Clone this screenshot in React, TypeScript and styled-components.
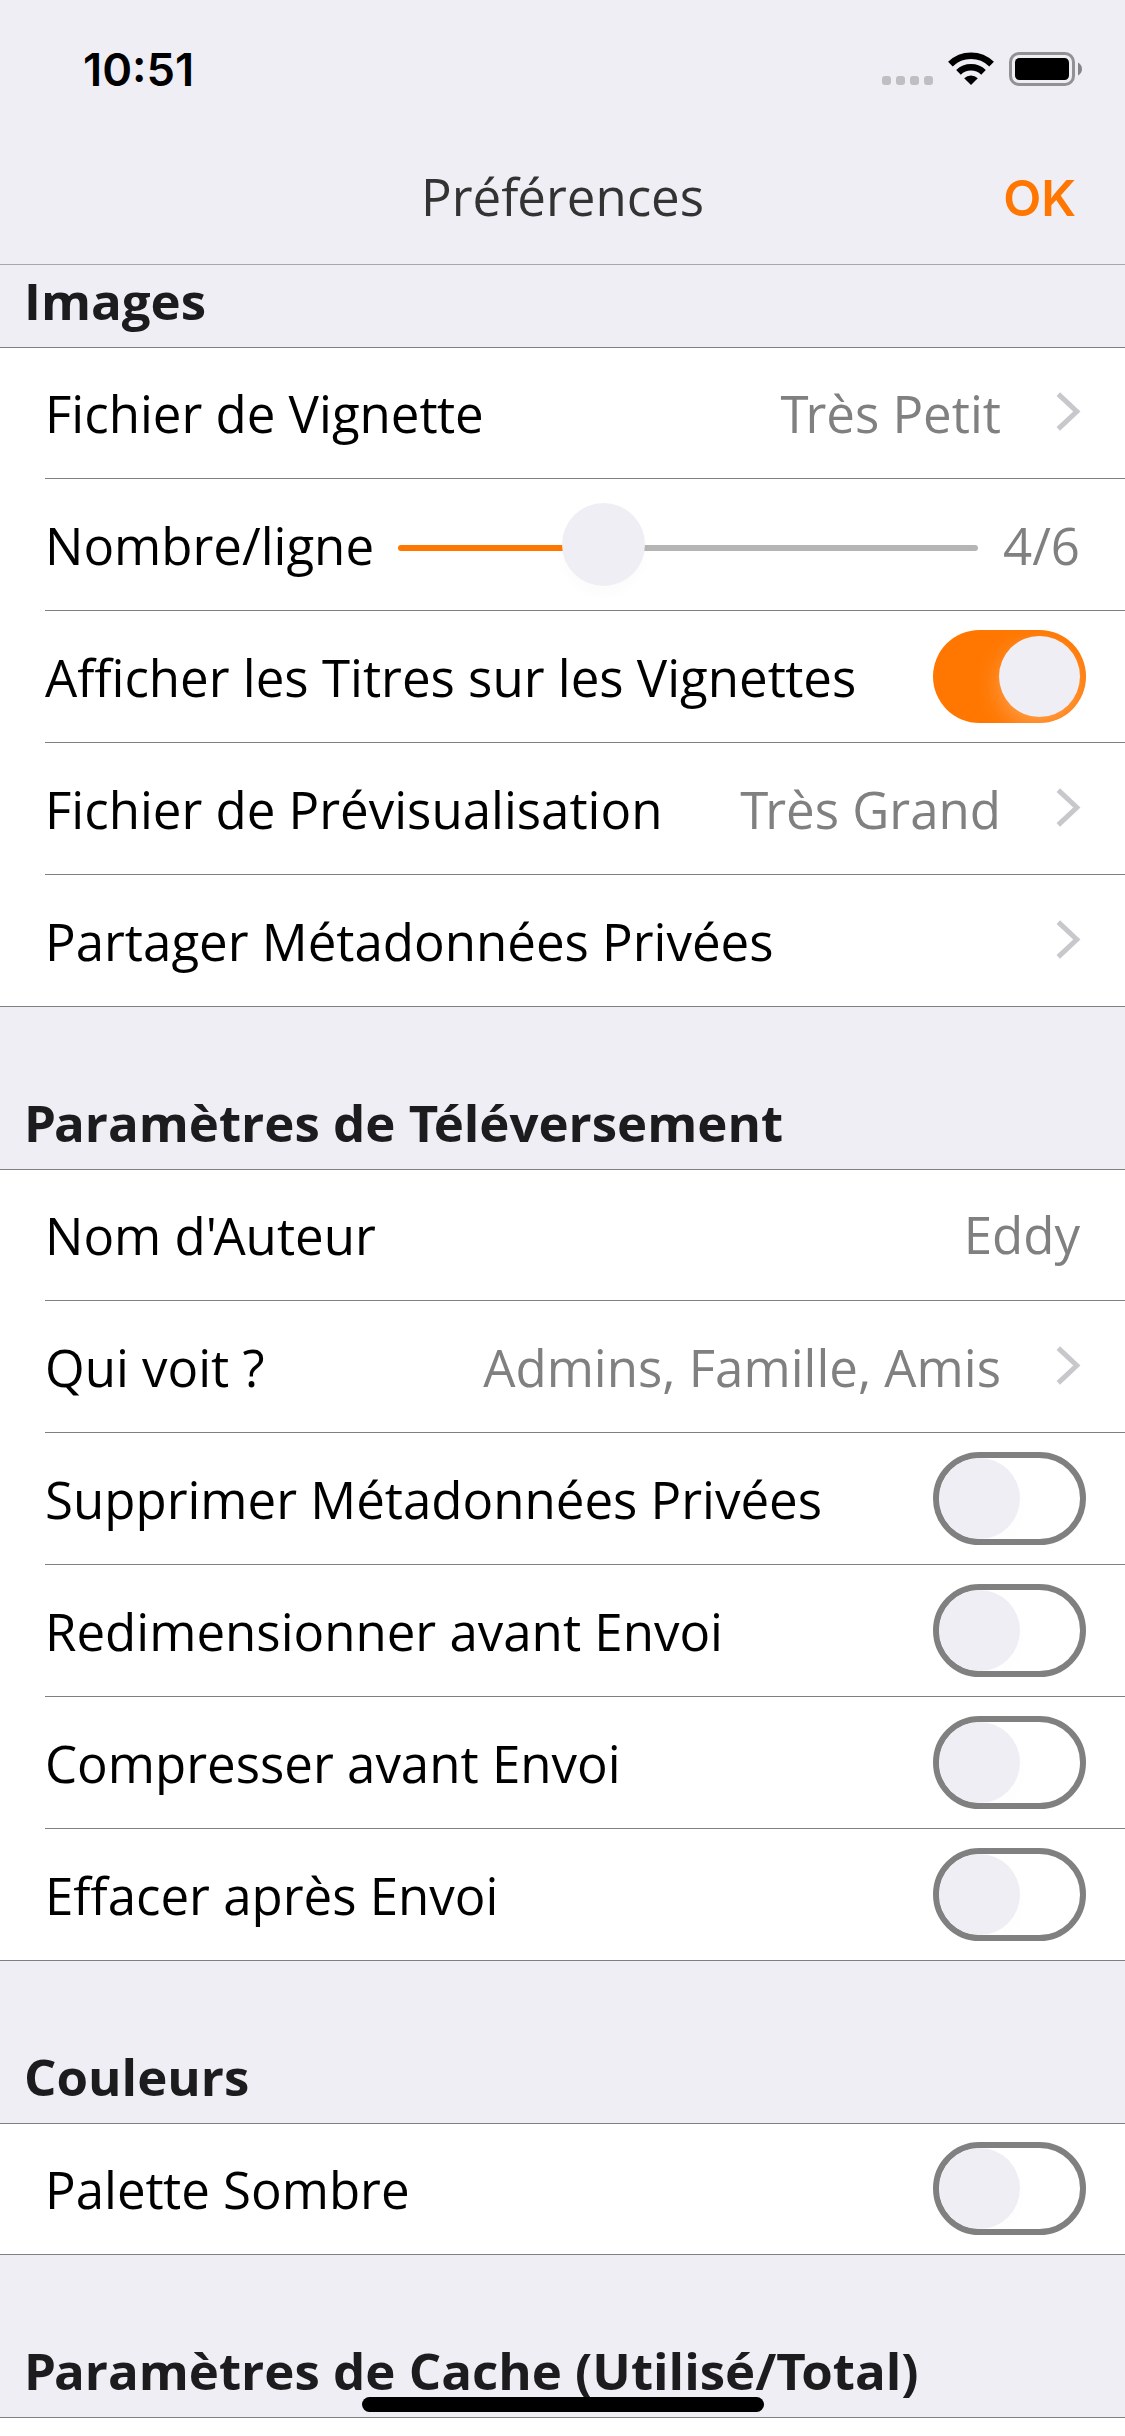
import React from "react";
import styled, { createGlobalStyle } from "styled-components";

const colors = {
  background: "#efeef4",
  cell: "#ffffff",
  orange: "#ff7700",
  separator: "#808080",
  detail: "#808080",
  heading: "#1c1c1e",
};

const GlobalStyle = createGlobalStyle`
  *, *::before, *::after { box-sizing: border-box; }
  body {
    margin: 0;
    background: ${colors.cell};
    font-family: "Open Sans", "Noto Sans", sans-serif;
    font-size: 51px;
  }
`;

const Screen = styled.main`
  position: relative;
  width: 1125px;
  height: 2436px;
  overflow: hidden;
  display: flex;
  flex-direction: column;
  background: ${colors.cell};
`;

const TopArea = styled.header`
  flex: none;
  height: 265px;
  display: flex;
  flex-direction: column;
  background: ${colors.background};
  border-bottom: 1px solid #a7a7ab;
`;

const StatusBar = styled.div`
  height: 132px;
  padding: 37px 43px 0 83px;
  display: flex;
  justify-content: space-between;
  align-items: flex-start;
`;

const Clock = styled.time`
  font: 600 45.300px/65px Inter, "Open Sans", sans-serif;
  color: #000;
`;

const StatusIcons = styled.div`
  display: flex;
  align-items: flex-end;
  padding-top: 15px;
`;

const SignalDots = styled.div`
  display: flex;
  gap: 5px;
  margin: 0 15px 1px 0;
`;

const Dot = styled.i`
  width: 9px;
  height: 9px;
  border-radius: 3px;
  background: #bfbfc2;
`;

const NavBar = styled.div`
  flex: 1;
  display: grid;
  grid-template-columns: 1fr auto 1fr;
  align-items: baseline;
  padding: 0 49px;
  line-height: 128px;
`;

const Title = styled.h1`
  grid-column: 2;
  margin: 0;
  font-size: 51px;
  font-weight: 400;
  color: #333333;
`;

const DoneButton = styled.button`
  justify-self: end;
  padding: 0;
  border: 0;
  background: none;
  font: 600 49.5px/60px Inter, "Open Sans", sans-serif;
  color: ${colors.orange};
`;

const SectionHeading = styled.h2<{ $compact?: boolean }>`
  flex: none;
  height: ${(p) => (p.$compact ? 82 : 162)}px;
  margin: 0;
  padding: 0 24px 9px;
  display: flex;
  align-items: flex-end;
  font-size: 51px;
  line-height: 76px;
  font-weight: 700;
  white-space: nowrap;
  color: ${colors.heading};
  background: ${colors.background};
`;

const Group = styled.section`
  flex: none;
  background: linear-gradient(${colors.separator}, ${colors.separator}) top / 100% 1px no-repeat, ${colors.cell};
`;

const Row = styled.div`
  height: 132px;
  margin-left: 45px;
  padding-right: 45px;
  display: flex;
  align-items: center;
  line-height: 132px;
  border-bottom: 1px solid ${colors.separator};

  &:last-child {
    margin-left: 0;
    padding-left: 45px;
  }
`;

const Label = styled.span`
  white-space: nowrap;
  color: #000;
`;

const Value = styled.span<{ $raised?: boolean }>`
  margin-left: auto;
  padding-bottom: ${(p) => (p.$raised ? 2 : 0)}px;
  white-space: nowrap;
  color: ${colors.detail};
`;

const Tight = styled.span<{ $by: number }>`
  letter-spacing: ${(p) => p.$by}em;
`;

const Chevron = styled.svg`
  flex: none;
  width: 26px;
  height: 42px;
  margin: 0 -1px 1px auto;
  ${Value} + & { margin-left: 54px; }
`;

const Switch = styled.span<{ $on?: boolean }>`
  flex: none;
  width: 153px;
  height: 93px;
  margin: 0 -6px 0 auto;
  padding: ${(p) => (p.$on ? 6 : 0)}px;
  display: flex;
  justify-content: ${(p) => (p.$on ? "flex-end" : "flex-start")};
  border: ${(p) => (p.$on ? "0" : `6px solid ${colors.separator}`)};
  border-radius: 47px;
  background: ${(p) => (p.$on ? colors.orange : "transparent")};
  overflow: hidden;
`;

const Knob = styled.span<{ $on?: boolean }>`
  width: 81px;
  height: 81px;
  border-radius: 50%;
  background: ${colors.background};
  box-shadow: ${(p) =>
    p.$on ? "0 9px 24px rgba(255, 255, 255, 0.3)" : "0 9px 24px rgba(0, 0, 0, 0.01)"};
`;

const Slider = styled.div`
  flex: none;
  width: 580px;
  height: 83px;
  margin: 0 0 0 24px;
  display: flex;
  align-items: center;
`;

const Track = styled.span<{ $width: number; $filled?: boolean }>`
  width: ${(p) => p.$width}px;
  height: 6px;
  margin-top: 7px;
  border-radius: ${(p) => (p.$filled ? "3px 0 0 3px" : "0 3px 3px 0")};
  background: ${(p) => (p.$filled ? colors.orange : "#b5b5b5")};
`;

const SliderKnob = styled.span`
  flex: none;
  width: 83px;
  height: 83px;
  margin: 0 -1px;
  border-radius: 50%;
  background: ${colors.background};
  box-shadow: 0 9px 12px rgba(0, 0, 0, 0.015);
  z-index: 1;
`;

const HomeIndicator = styled.div`
  position: absolute;
  left: 362px;
  bottom: 24px;
  width: 402px;
  height: 15px;
  border-radius: 8px;
  background: #000;
`;

const regularPairs: Record<string, number> = { Tr: -0.06, "'A": -0.07, "fé": -0.02, tt: -0.015 };
const boldPairs: Record<string, number> = { "Té": -0.09, To: -0.09, Pa: -0.04 };

function Kerned({ text, bold }: { text: string; bold?: boolean }) {
  const pairs = bold ? boldPairs : regularPairs;
  const parts: React.ReactNode[] = [];
  let run = "";
  for (let i = 0; i < text.length; i++) {
    const by = pairs[text.slice(i, i + 2)];
    if (by) {
      parts.push(run, <Tight key={i} $by={by}>{text[i]}</Tight>);
      run = "";
    } else {
      run += text[i];
    }
  }
  return <span>{parts}{run}</span>;
}

function Wifi() {
  return (
    <svg width="61" height="34" viewBox="0 0 61 34">
      <g fill="none" stroke="#000" strokeWidth="6.6">
        <path d="M2.4 12.2A29.5 29.5 0 0 1 43.6 12.2" />
        <path d="M10.5 20.3A18 18 0 0 1 35.5 20.3" />
      </g>
      <path d="M16.2 26.3A9.8 9.8 0 0 1 29.8 26.3L23 33Z" fill="#000" />
    </svg>
  );
}

function Battery() {
  return (
    <svg width="73" height="34" viewBox="0 0 73 34">
      <rect x="1.5" y="1.5" width="63" height="31" rx="8.5" fill="none" stroke="#929294" strokeWidth="3" />
      <rect x="6" y="6" width="54" height="22" rx="4.5" fill="#000" />
      <path d="M69 10.5C74.300 13 74.300 21 69 23.500Z" fill="#858587" />
    </svg>
  );
}

function Disclosure() {
  return (
    <Chevron viewBox="0 0 26 42">
      <path d="M3.300 3.200L21.800 20.500L3.300 37.800" fill="none" stroke="#c7c7cc" strokeWidth="5" />
    </Chevron>
  );
}

function Toggle({ on }: { on?: boolean }) {
  return (
    <Switch $on={on}>
      <Knob $on={on} />
    </Switch>
  );
}

function Heading({ text, compact }: { text: string; compact?: boolean }) {
  return (
    <SectionHeading $compact={compact}>
      <Kerned text={text} bold />
    </SectionHeading>
  );
}

type CellProps = {
  label: string;
  value?: string;
  link?: boolean;
  editable?: boolean;
  children?: React.ReactNode;
};

function Cell({ label, value, link, editable, children }: CellProps) {
  return (
    <Row>
      <Label>
        <Kerned text={label} />
      </Label>
      {children}
      {value && (
        <Value $raised={editable}>
          <Kerned text={value} />
        </Value>
      )}
      {link && <Disclosure />}
    </Row>
  );
}

export default function App() {
  return (
    <Screen>
      <GlobalStyle />
      <TopArea>
        <StatusBar>
          <Clock>10:51</Clock>
          <StatusIcons>
            <SignalDots>
              <Dot />
              <Dot />
              <Dot />
              <Dot />
            </SignalDots>
            <Wifi />
            <Battery />
          </StatusIcons>
        </StatusBar>
        <NavBar>
          <Title>
            <Kerned text="Préférences" />
          </Title>
          <DoneButton>OK</DoneButton>
        </NavBar>
      </TopArea>

      <Heading compact text="Images" />
      <Group>
        <Cell label="Fichier de Vignette" value="Très Petit" link />
        <Cell label="Nombre/ligne" value="4/6">
          <Slider>
            <Track $width={165} $filled />
            <SliderKnob />
            <Track $width={334} />
          </Slider>
        </Cell>
        <Cell label="Afficher les Titres sur les Vignettes">
          <Toggle on />
        </Cell>
        <Cell label="Fichier de Prévisualisation" value="Très Grand" link />
        <Cell label="Partager Métadonnées Privées" link />
      </Group>

      <Heading text="Paramètres de Téléversement" />
      <Group>
        <Cell label="Nom d'Auteur" value="Eddy" editable />
        <Cell label="Qui voit ?" value="Admins, Famille, Amis" link />
        <Cell label="Supprimer Métadonnées Privées">
          <Toggle />
        </Cell>
        <Cell label="Redimensionner avant Envoi">
          <Toggle />
        </Cell>
        <Cell label="Compresser avant Envoi">
          <Toggle />
        </Cell>
        <Cell label="Effacer après Envoi">
          <Toggle />
        </Cell>
      </Group>

      <Heading text="Couleurs" />
      <Group>
        <Cell label="Palette Sombre">
          <Toggle />
        </Cell>
      </Group>

      <Heading text="Paramètres de Cache (Utilisé/Total)" />
      <Group>
        <Cell label="" />
      </Group>
      <HomeIndicator />
    </Screen>
  );
}
